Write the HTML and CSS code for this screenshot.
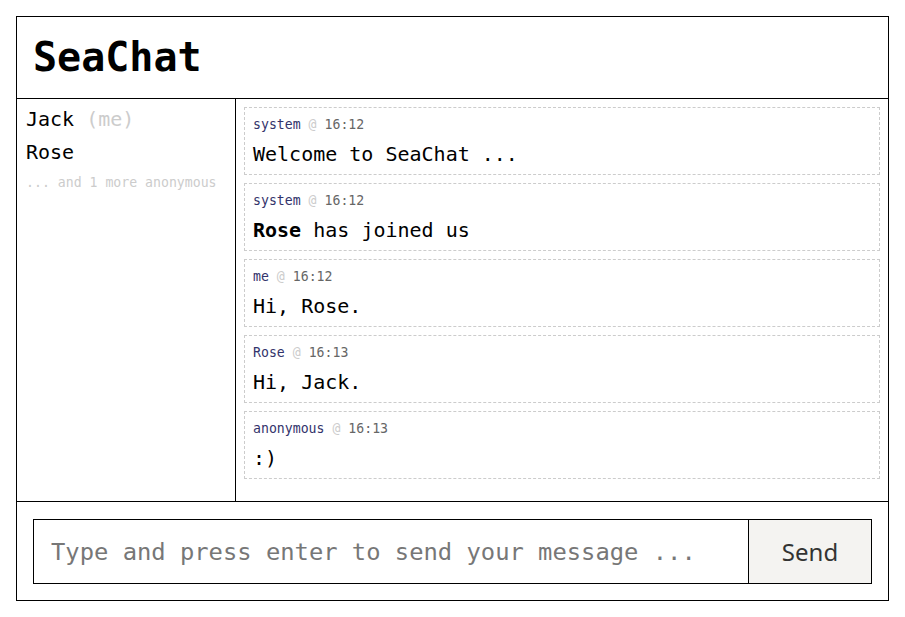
FILE: index.html
```html
<!DOCTYPE html>
<html lang="en">
<head>
<meta charset="utf-8">
<title>SeaChat</title>
<link rel="stylesheet" href="styles.css">
</head>
<body>
<div class="app">
  <header class="header"><h1 class="title">SeaChat</h1></header>
  <div class="main">
    <aside class="sidebar">
      <div class="user">Jack <span class="me">(me)</span></div>
      <div class="user">Rose</div>
      <div class="more">... and 1 more anonymous</div>
    </aside>
    <section class="messages">
      <div class="msg">
        <div class="meta"><span class="name">system</span> <span class="at">@</span> <span class="time">16:12</span></div>
        <div class="body">Welcome to SeaChat ...</div>
      </div>
      <div class="msg">
        <div class="meta"><span class="name">system</span> <span class="at">@</span> <span class="time">16:12</span></div>
        <div class="body"><b>Rose</b> has joined us</div>
      </div>
      <div class="msg">
        <div class="meta"><span class="name">me</span> <span class="at">@</span> <span class="time">16:12</span></div>
        <div class="body">Hi, Rose.</div>
      </div>
      <div class="msg">
        <div class="meta"><span class="name">Rose</span> <span class="at">@</span> <span class="time">16:13</span></div>
        <div class="body">Hi, Jack.</div>
      </div>
      <div class="msg">
        <div class="meta"><span class="name">anonymous</span> <span class="at">@</span> <span class="time">16:13</span></div>
        <div class="body">:)</div>
      </div>
    </section>
  </div>
  <footer class="footer">
    <form class="composer">
      <input class="input" type="text" placeholder="Type and press enter to send your message ...">
      <button class="send" type="button">Send</button>
    </form>
  </footer>
</div>
</body>
</html>
```

FILE: styles.css
```css
* { box-sizing: border-box; }
html, body { margin: 0; padding: 0; background: #fff; }
body {
  padding: 16px;
  font-family: "DejaVu Sans Mono", "Liberation Mono", monospace;
  color: #000;
}
.app {
  border: 1px solid #000;
  height: 585px;
  display: flex;
  flex-direction: column;
}
.header {
  border-bottom: 1px solid #000;
  padding: 0 16px;
}
.title {
  margin: 0;
  font-size: 40px;
  font-weight: bold;
  line-height: 81px;
}
.main {
  flex: 1;
  display: flex;
  min-height: 0;
}
.sidebar {
  width: 219px;
  border-right: 1px solid #000;
  padding: 4px 9px 0;
}
.user {
  font-size: 20px;
  line-height: 33px;
}
.me { color: #ccc; }
.more {
  font-size: 13.2px;
  line-height: 27px;
  color: #ccc;
  white-space: nowrap;
}
.messages {
  flex: 1;
  padding: 8px;
  display: flex;
  flex-direction: column;
  gap: 8px;
  overflow: hidden;
}
.msg {
  border: 1px dashed #ccc;
  padding: 8px 8px 4px;
}
.meta {
  font-size: 13.2px;
  line-height: 18px;
  color: #666;
}
.name { color: #33336b; }
.at { color: #ccc; }
.time { color: #666; }
.body {
  margin-top: 4px;
  font-size: 20px;
  line-height: 32px;
}
.footer {
  border-top: 1px solid #000;
  padding: 17px 16px 16px;
}
.composer {
  display: flex;
  margin: 0;
  height: 65px;
}
.input {
  flex: 1;
  min-width: 0;
  border: 1px solid #000;
  border-right: none;
  padding: 0 0 0 17px;
  font-family: "DejaVu Sans Mono", "Liberation Mono", monospace;
  font-size: 23.8px;
  color: #000;
  outline: none;
}
.input::placeholder { color: #777; }
.send {
  width: 124px;
  border: 1px solid #000;
  background: #f4f3f1;
  font-family: "Noto Sans", "Open Sans", sans-serif;
  font-size: 24px;
  color: #333;
  padding: 0;
}
```
